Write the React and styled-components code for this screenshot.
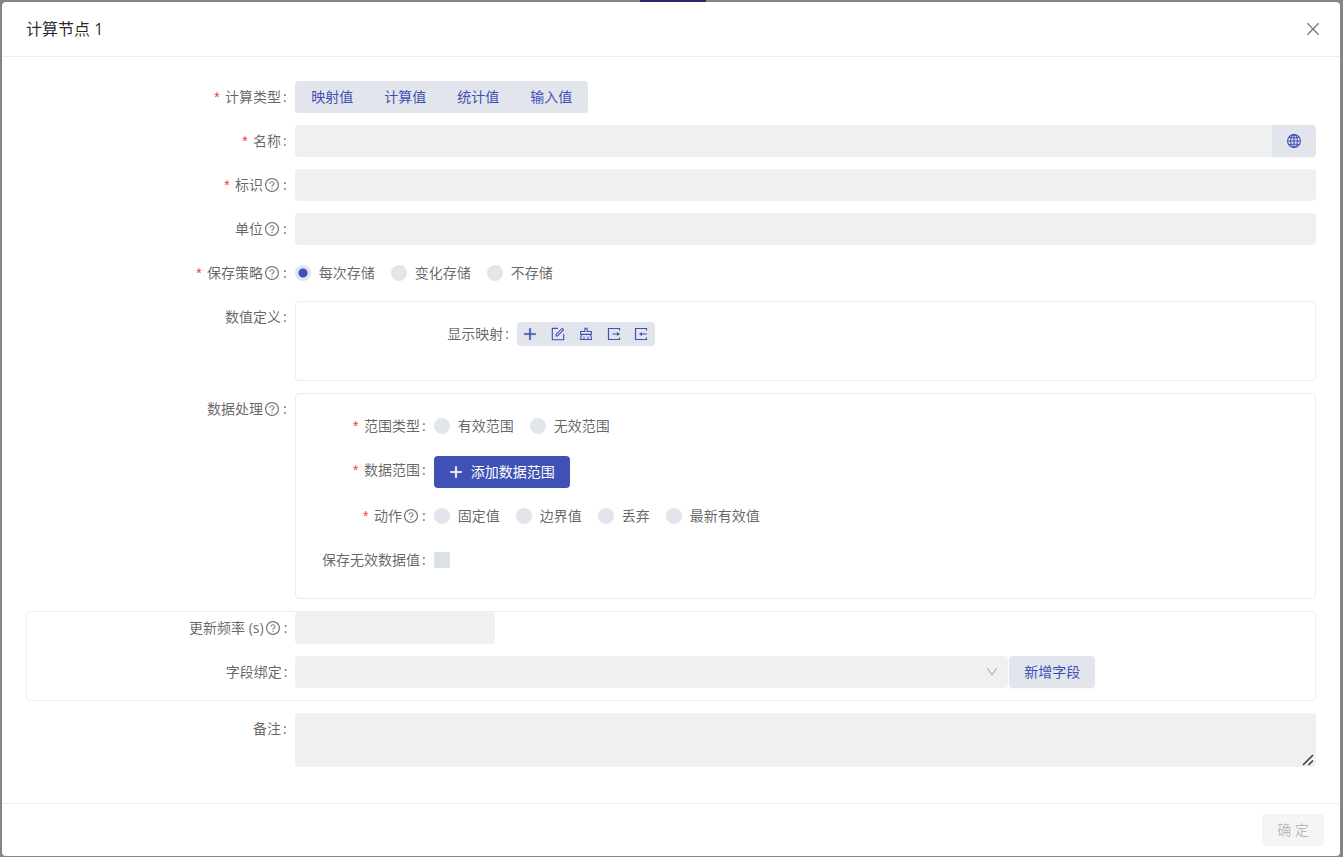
import React, { useState } from 'react';
import styled, { createGlobalStyle } from 'styled-components';
import {
  AiOutlineClear,
  AiOutlineClose,
  AiOutlineDown,
  AiOutlineForm,
  AiOutlinePlus,
  AiOutlineQuestionCircle,
} from 'react-icons/ai';

const color = {
  primary: '#3f51b5',
  text: 'rgba(0, 0, 0, 0.62)',
  title: 'rgba(0, 0, 0, 0.85)',
  field: '#eff0f2',
  soft: '#e2e5ec',
  check: '#dce1e6',
  line: '#ebedf0',
  required: '#fa3236',
};

// the antd glyphs leave a 64 unit margin, this crops it
const tight = '64 64 896 896';

const GlobalStyle = createGlobalStyle`
  * {
    box-sizing: border-box;
  }
  body {
    margin: 0;
    background: #858585;
    color: ${color.text};
    font: 14px/22px 'Open Sans', 'Noto Sans CJK SC', sans-serif;
  }
  button, input, select, textarea {
    margin: 0;
    font: inherit;
    color: inherit;
  }
  svg {
    display: block;
    flex: none;
  }
`;

const Backdrop = styled.div`
  position: relative;
  display: flex;
  min-height: 100vh;
  padding: 2px 3px 1px 2px;
`;

// part of the page tab bar that shows above the dialog
const ActiveTab = styled.div`
  position: absolute;
  top: 0;
  left: 640px;
  width: 66px;
  height: 2px;
  background: #262a66;
`;

const Dialog = styled.section`
  flex: 1;
  display: flex;
  flex-direction: column;
  min-width: 0;
  background: #fff;
  border-radius: 4px;
`;

const DialogHeader = styled.header`
  display: flex;
  align-items: center;
  justify-content: space-between;
  padding: 16px 19px 16px 24px;
  border-bottom: 1px solid ${color.line};
  h1 {
    margin: 0;
    font-size: 16px;
    line-height: 22px;
    font-weight: 400;
    color: ${color.title};
  }
`;

const CloseButton = styled.button`
  padding: 0;
  border: none;
  background: none;
  color: rgba(0, 0, 0, 0.5);
  font-size: 16px;
  cursor: pointer;
`;

const DialogBody = styled.form`
  flex: 1;
  display: flex;
  flex-direction: column;
  gap: 12px;
  padding: 24px;
`;

const DialogFooter = styled.footer`
  display: flex;
  justify-content: flex-end;
  padding: 10px 16px;
  border-top: 1px solid ${color.line};
`;

const Row = styled.div`
  display: grid;
  grid-template-columns: minmax(0, ${({ $span = 5 }) => $span}fr) minmax(0, ${({ $span = 5 }) => 24 - $span}fr);
`;

const RowLabel = styled.label`
  display: flex;
  align-items: center;
  justify-content: flex-end;
  height: 32px;
  padding-right: 8px;
  white-space: nowrap;
  svg {
    margin: 0 2px;
    color: rgba(0, 0, 0, 0.55);
  }
`;

const Required = styled.span`
  margin-right: 4px;
  padding-top: 4px;
  color: ${color.required};
  font-family: 'Liberation Mono', monospace;
`;

const Colon = styled.span`
  margin-left: 2px;
`;

const Control = styled.div`
  display: flex;
  align-items: center;
  min-height: 32px;
  padding-top: ${({ $top = 0 }) => $top}px;
`;

const Panel = styled.div`
  display: flex;
  flex-direction: column;
  gap: 12px;
  min-height: 80px;
  padding: ${({ $padding }) => $padding};
  border: 1px solid ${color.line};
  border-radius: 4px;
`;

const TextInput = styled.input`
  flex: ${({ $width }) => ($width ? 'none' : 1)};
  width: ${({ $width }) => ($width ? `${$width}px` : 'auto')};
  min-width: 0;
  height: 32px;
  padding: 4px 11px;
  border: none;
  border-radius: ${({ $joined }) => ($joined ? '4px 0 0 4px' : '4px')};
  background: ${color.field};
`;

const TextAreaBox = styled.div`
  position: relative;
  flex: 1;
  display: flex;
  svg {
    position: absolute;
    right: 2px;
    bottom: 1px;
    color: rgba(0, 0, 0, 0.75);
    pointer-events: none;
  }
`;

const TextArea = styled.textarea`
  flex: 1;
  height: 54px;
  padding: 4px 11px;
  border: none;
  border-radius: 4px;
  background: ${color.field};
  resize: vertical;
  &::-webkit-resizer {
    background: none;
  }
`;

const Button = styled.button`
  display: flex;
  align-items: center;
  justify-content: center;
  gap: 8px;
  height: 32px;
  padding: 0 15px;
  border: none;
  border-radius: 4px;
  background: ${color.soft};
  color: ${color.primary};
  box-shadow: 0 2px 0 rgba(0, 0, 0, 0.015);
  white-space: nowrap;
  cursor: pointer;
`;

const PrimaryButton = styled(Button)`
  background: ${color.primary};
  color: #fff;
`;

const ConfirmButton = styled(Button)`
  width: 62px;
  background: #f5f5f5;
  color: rgba(0, 0, 0, 0.25);
  box-shadow: none;
`;

const AddonButton = styled(Button)`
  width: 44px;
  border-radius: 0 4px 4px 0;
`;

const FieldButton = styled(Button)`
  width: 86px;
`;

const TypeGroup = styled.div`
  display: flex;
  padding-left: 1px;
  border-radius: 4px;
  background: ${color.soft};
  ${Button} {
    width: 73px;
    box-shadow: none;
  }
`;

const ToolGroup = styled.div`
  display: flex;
  width: 138px;
  border-radius: 4px;
  overflow: hidden;
  ${Button} {
    flex: 1;
    height: 24px;
    padding: 0;
    border-radius: 0;
  }
  ${Button} + ${Button} {
    border-left: 1px solid #dfe2ea;
  }
`;

const RadioGroup = styled.div`
  display: flex;
  gap: 16px;
`;

const Option = styled.label`
  display: flex;
  align-items: center;
  gap: 8px;
`;

const Radio = styled.input.attrs({ type: 'radio' })`
  appearance: none;
  width: 16px;
  height: 16px;
  border-radius: 50%;
  background: ${color.soft};
  &:checked {
    background: radial-gradient(circle, ${color.primary} 4px, ${color.soft} 5px);
  }
`;

const Checkbox = styled.input.attrs({ type: 'checkbox' })`
  appearance: none;
  width: 16px;
  height: 16px;
  border-radius: 2px;
  background: ${color.check};
  &:checked {
    background: ${color.primary};
  }
`;

const SelectGroup = styled.div`
  display: flex;
  gap: 1px;
  width: 800px;
  max-width: 100%;
`;

const SelectBox = styled.div`
  flex: 1;
  display: grid;
  align-items: center;
  select, svg {
    grid-area: 1 / 1;
  }
  select {
    appearance: none;
    height: 32px;
    padding: 0 32px 0 11px;
    border: none;
    border-radius: 4px;
    background: ${color.field};
  }
  svg {
    justify-self: end;
    margin-right: 10px;
    font-size: 12px;
    color: rgba(0, 0, 0, 0.3);
    pointer-events: none;
  }
`;

const GlobeIcon = () => (
  <svg width="14" height="14" viewBox="0 0 14 14" fill="none" stroke="currentColor" strokeWidth="1.1">
    <circle cx="7" cy="7" r="6.4" />
    <ellipse cx="7" cy="7" rx="3.4" ry="6.4" />
    <path d="M7 .6v12.8M.6 7h12.8M2 3.2q5 1.6 10 0M2 10.8q5-1.6 10 0" />
  </svg>
);

const ExportIcon = () => (
  <svg width="14" height="14" viewBox="0 0 14 14" fill="none" stroke="currentColor" strokeWidth="1.2">
    <path d="M12.5 3.4V1.5h-11v11h11v-1.9M5.5 7h5" />
    <path d="M10 4.9 13 7l-3 2.1z" fill="currentColor" stroke="none" />
  </svg>
);

const ImportIcon = () => (
  <svg width="14" height="14" viewBox="0 0 14 14" fill="none" stroke="currentColor" strokeWidth="1.2">
    <path d="M12.5 3.4V1.5h-11v11h11v-1.9M7.5 7h5.2" />
    <path d="M8 4.9 5 7l3 2.1z" fill="currentColor" stroke="none" />
  </svg>
);

const ResizeGrip = () => (
  <svg width="12" height="12" viewBox="0 0 12 12" fill="none" stroke="currentColor" strokeWidth="1.5">
    <path d="M1 11 11 1M6.5 11 11 6.5" />
  </svg>
);

const Label = ({ children, htmlFor, id, required, help }) => (
  <RowLabel as={htmlFor ? 'label' : 'span'} htmlFor={htmlFor} id={id}>
    {required && <Required>*</Required>}
    {children}
    {help && <AiOutlineQuestionCircle viewBox={tight} />}
    <Colon>:</Colon>
  </RowLabel>
);

const Radios = ({ name, options, initial, labelledBy }) => {
  const [value, setValue] = useState(initial);
  return (
    <RadioGroup role="radiogroup" aria-labelledby={labelledBy}>
      {options.map((item) => (
        <Option key={item}>
          <Radio name={name} checked={value === item} onChange={() => setValue(item)} />
          {item}
        </Option>
      ))}
    </RadioGroup>
  );
};

const calcTypes = ['映射值', '计算值', '统计值', '输入值'];

const mappingTools = [
  { label: '新增', icon: <AiOutlinePlus viewBox={tight} strokeWidth={40} /> },
  { label: '编辑', icon: <AiOutlineForm viewBox={tight} /> },
  { label: '清空', icon: <AiOutlineClear viewBox={tight} /> },
  { label: '导出', icon: <ExportIcon /> },
  { label: '导入', icon: <ImportIcon /> },
];

const App = () => (
  <>
    <GlobalStyle />
    <Backdrop>
      <ActiveTab />
      <Dialog role="dialog" aria-labelledby="dialog-title">
        <DialogHeader>
          <h1 id="dialog-title">计算节点 1</h1>
          <CloseButton type="button" aria-label="关闭"><AiOutlineClose viewBox={tight} /></CloseButton>
        </DialogHeader>
        <DialogBody id="node-form">
          <Row>
            <Label required id="type-label">计算类型</Label>
            <Control>
              <TypeGroup role="group" aria-labelledby="type-label">
                {calcTypes.map((item) => <Button type="button" key={item}>{item}</Button>)}
              </TypeGroup>
            </Control>
          </Row>
          <Row>
            <Label required htmlFor="name">名称</Label>
            <Control>
              <TextInput id="name" $joined />
              <AddonButton type="button" aria-label="多语言"><GlobeIcon /></AddonButton>
            </Control>
          </Row>
          <Row>
            <Label required help htmlFor="key">标识</Label>
            <Control><TextInput id="key" /></Control>
          </Row>
          <Row>
            <Label help htmlFor="unit">单位</Label>
            <Control><TextInput id="unit" /></Control>
          </Row>
          <Row>
            <Label required help id="save-label">保存策略</Label>
            <Control>
              <Radios name="save" labelledBy="save-label" initial="每次存储" options={['每次存储', '变化存储', '不存储']} />
            </Control>
          </Row>
          <Row>
            <Label>数值定义</Label>
            <Panel $padding="16px 15px">
              <Row>
                <Label id="mapping-label">显示映射</Label>
                <Control>
                  <ToolGroup role="group" aria-labelledby="mapping-label">
                    {mappingTools.map(({ label, icon }) => (
                      <Button type="button" key={label} aria-label={label}>{icon}</Button>
                    ))}
                  </ToolGroup>
                </Control>
              </Row>
            </Panel>
          </Row>
          <Row>
            <Label help>数据处理</Label>
            <Panel $padding="16px 14px 22px">
              <Row $span={3}>
                <Label required id="range-label">范围类型</Label>
                <Control>
                  <Radios name="range" labelledBy="range-label" options={['有效范围', '无效范围']} />
                </Control>
              </Row>
              <Row $span={3}>
                <Label required>数据范围</Label>
                <Control $top={2}>
                  <PrimaryButton type="button"><AiOutlinePlus viewBox={tight} strokeWidth={40} />添加数据范围</PrimaryButton>
                </Control>
              </Row>
              <Row $span={3}>
                <Label required help id="action-label">动作</Label>
                <Control>
                  <Radios name="action" labelledBy="action-label" options={['固定值', '边界值', '丢弃', '最新有效值']} />
                </Control>
              </Row>
              <Row $span={3}>
                <Label htmlFor="keep-invalid">保存无效数据值</Label>
                <Control><Checkbox id="keep-invalid" /></Control>
              </Row>
            </Panel>
          </Row>
          <Panel $padding="0 0 12px">
            <Row>
              <Label help htmlFor="interval">更新频率 (s)</Label>
              <Control><TextInput id="interval" $width={200} /></Control>
            </Row>
            <Row>
              <Label htmlFor="field">字段绑定</Label>
              <Control>
                <SelectGroup>
                  <SelectBox>
                    <select id="field" />
                    <AiOutlineDown viewBox={tight} />
                  </SelectBox>
                  <FieldButton type="button">新增字段</FieldButton>
                </SelectGroup>
              </Control>
            </Row>
          </Panel>
          <Row>
            <Label htmlFor="remark">备注</Label>
            <Control>
              <TextAreaBox>
                <TextArea id="remark" />
                <ResizeGrip />
              </TextAreaBox>
            </Control>
          </Row>
        </DialogBody>
        <DialogFooter>
          <ConfirmButton type="submit" form="node-form" disabled>确 定</ConfirmButton>
        </DialogFooter>
      </Dialog>
    </Backdrop>
  </>
);

export default App;
